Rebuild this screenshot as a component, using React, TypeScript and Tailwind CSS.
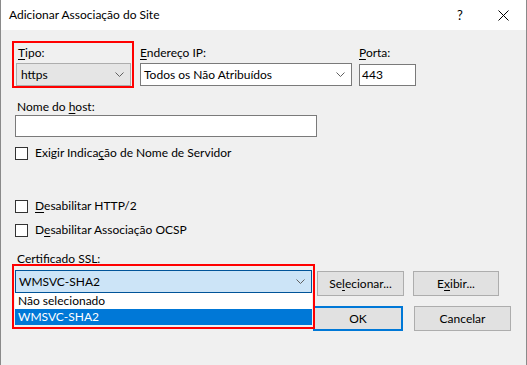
import React from "react";

const Chevron = () => (
  <svg width="9" height="5" viewBox="0 0 9 5" className="block">
    <polyline points="0.5,0.5 4.5,4.5 8.5,0.5" fill="none" stroke="#606060" strokeWidth="1" />
  </svg>
);

const U = ({ children }: { children: React.ReactNode }) => (
  <span className="underline underline-offset-[2px] decoration-[1px]">{children}</span>
);

const Check = ({ children }: { children: React.ReactNode }) => (
  <div className="flex items-center h-[16px] ml-[3px]">
    <div className="w-[13px] h-[13px] border border-[#333] bg-white" />
    <span className="ml-[7px]">{children}</span>
  </div>
);

const Btn = ({ w, children, ok }: { w: string; children: React.ReactNode; ok?: boolean }) => (
  <div
    className={`${w} h-[25px] flex items-center justify-center bg-[#e1e1e1] ${
      ok ? "border-2 border-[#0078d7]" : "border border-[#adadad]"
    }`}
  >
    {children}
  </div>
);

export default function App() {
  return (
    <div className="relative w-[527px] h-[365px] overflow-hidden bg-[#f0f0f0] border-x border-[#8a8a8a] text-[12px] leading-[16px] text-black font-['Lato','Noto_Sans',sans-serif]">
      {/* title bar */}
      <div className="h-[30px] bg-white flex items-center pl-[8px]">
        <span className="flex-1">Adicionar Associação do Site</span>
        <span className="w-[12px] text-center mr-[32px] text-[13px]">?</span>
        <svg width="11" height="11" viewBox="0 0 11 11" className="mr-[17px]">
          <line x1="0.5" y1="0.5" x2="10.5" y2="10.5" stroke="#000" strokeWidth="1" />
          <line x1="10.5" y1="0.5" x2="0.5" y2="10.5" stroke="#000" strokeWidth="1" />
        </svg>
      </div>

      <div className="pl-[11px] pt-[11px]">
        {/* row 1 */}
        <div className="flex items-start">
          <div className="w-[122px] h-[47px] border-2 border-[#ff0000] pt-[2px] pl-[2px]">
            <div className="h-[16px] pl-[2px]">
              <U>T</U>ipo:
            </div>
            <div className="mt-[2px] w-[115px] h-[23px] bg-[#e5e5e5] border border-[#adadad] flex items-center justify-between pl-[4px] pr-[6px]">
              <span>https</span>
              <Chevron />
            </div>
          </div>
          <div className="ml-[6px] mt-[4px]">
            <div className="h-[16px]">
              <U>E</U>ndereço IP:
            </div>
            <div className="mt-[2px] w-[212px] h-[23px] bg-white border border-[#7a7a7a] flex items-center justify-between pl-[3px] pr-[6px]">
              <span>Todos os Não Atribuídos</span>
              <Chevron />
            </div>
          </div>
          <div className="ml-[7px] mt-[4px]">
            <div className="h-[16px]">
              <U>P</U>orta:
            </div>
            <div className="mt-[3px] w-[57px] h-[22px] bg-white border border-[#7a7a7a] flex items-center pl-[2px]">
              443
            </div>
          </div>
        </div>

        {/* host */}
        <div className="ml-[3px] mt-[11px] h-[16px] pl-[2px]">
          Nome do <U>h</U>ost:
        </div>
        <div className="ml-[3px] w-[302px] h-[22px] bg-white border border-[#7a7a7a]" />

        <div className="mt-[8px]">
          <Check>
            Exigir Indica<U>ç</U>ão de Nome de Servidor
          </Check>
        </div>
        <div className="mt-[37px]">
          <Check>
            <U>D</U>esabilitar HTTP/2
          </Check>
        </div>
        <div className="mt-[8px]">
          <Check>
            D<U>e</U>sabilitar Associação OCSP
          </Check>
        </div>

        {/* certificate */}
        <div className="ml-[3px] mt-[13px] h-[16px] pl-[2px]">Certificado SSL:</div>
        <div className="flex items-start mt-[3px] ml-[3px]">
          <div className="relative w-[297px] h-[23px]">
            <div className="w-full h-full bg-[#cce4f7] border border-[#005499] flex items-center justify-between pl-[3px] pr-[6px]">
              <span>WMSVC-SHA2</span>
              <Chevron />
            </div>
            <div className="absolute left-0 top-[23px] w-[297px] bg-white z-10">
              <div className="h-[16px] pl-[3px] flex items-center">Não selecionado</div>
              <div className="h-[16px] pl-[3px] flex items-center bg-[#0078d7] text-white">WMSVC-SHA2</div>
            </div>
            <div className="absolute -left-[3px] -top-[6px] w-[303px] h-[65px] border-2 border-[#ff0000] z-20" />
          </div>
          <div className="ml-[5px] mt-[1px] flex gap-[9px]">
            <Btn w="w-[87px]">
              <span>
                Se<U>l</U>ecionar...
              </span>
            </Btn>
            <Btn w="w-[86px]">
              <span>
                E<U>x</U>ibir...
              </span>
            </Btn>
          </div>
        </div>

        <div className="flex justify-end gap-[11px] mt-[10px] pr-[15px]">
          <Btn w="w-[90px]" ok>
            OK
          </Btn>
          <Btn w="w-[97px]">Cancelar</Btn>
        </div>
      </div>
    </div>
  );
}
